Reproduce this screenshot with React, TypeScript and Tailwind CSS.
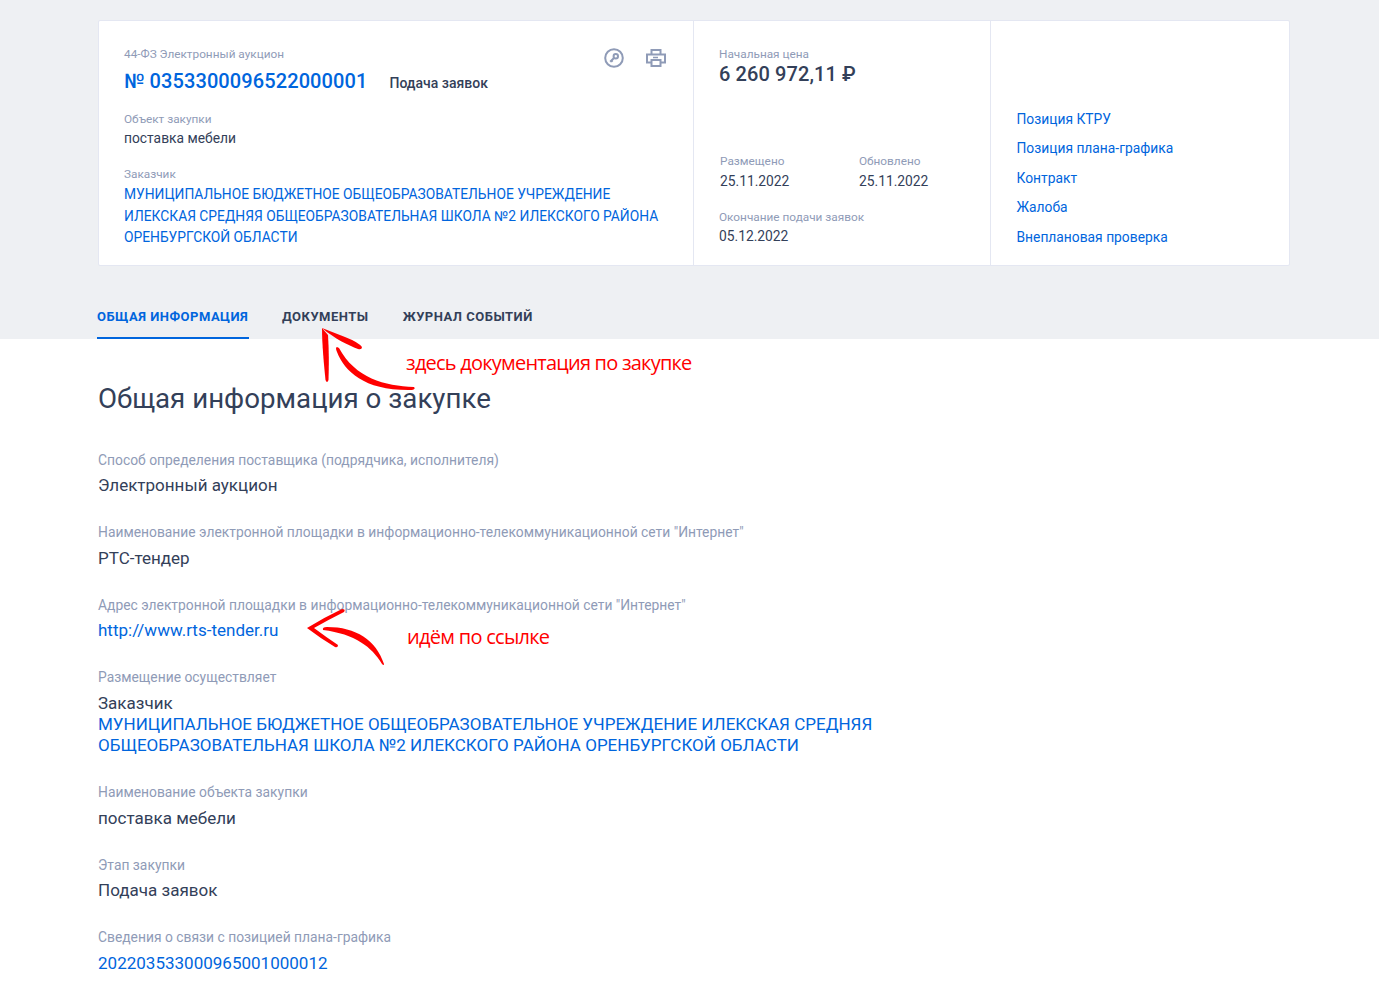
import React from "react";

type Field = {
  label: string;
  value?: string;
  link?: string;
};

const fields: Field[] = [
  { label: "Способ определения поставщика (подрядчика, исполнителя)", value: "Электронный аукцион" },
  { label: 'Наименование электронной площадки в информационно-телекоммуникационной сети "Интернет"', value: "РТС-тендер" },
  { label: 'Адрес электронной площадки в информационно-телекоммуникационной сети "Интернет"', link: "http://www.rts-tender.ru" },
];

const fieldsAfter: Field[] = [
  { label: "Наименование объекта закупки", value: "поставка мебели" },
  { label: "Этап закупки", value: "Подача заявок" },
  { label: "Сведения о связи с позицией плана-графика", link: "202203533000965001000012" },
];

const sideLinks = ["Позиция КТРУ", "Позиция плана-графика", "Контракт", "Жалоба", "Внеплановая проверка"];

function InfoField({ label, value, link }: Field) {
  return (
    <div className="h-[72.5px]">
      <div className="text-[13.85px] leading-[21px] text-[#8f9bb7]">{label}</div>
      <div className={"mt-[4.5px] text-[17.02px] leading-[21px] " + (link ? "text-[#0065dd]" : "text-[#334059]")}>
        {link || value}
      </div>
    </div>
  );
}

function SmallLabel({ children }: { children: React.ReactNode }) {
  return <div className="text-[11.8px] leading-[16px] text-[#8f9bb7]">{children}</div>;
}

export default function App() {
  return (
    <div className="relative min-h-[1000px] overflow-hidden bg-white font-['Roboto',sans-serif]">
      <div className="h-[339px] bg-[#eef0f3] pt-[20px]">
        <div className="mx-[98px] flex h-[246px] w-[1192px] rounded-[2px] border border-[#e4e7f2] bg-white">
          <div className="w-[595px] border-r border-[#e4e7f2] pl-[25px] pt-[25px]">
            <div className="flex h-[65px]">
              <div className="w-[480px]">
                <SmallLabel>44-ФЗ Электронный аукцион</SmallLabel>
                <div className="mt-[6px] flex items-baseline">
                  <span className="text-[20px] font-medium leading-[26px] tracking-[0.1px] text-[#0065dd]">№ 0353300096522000001</span>
                  <span className="ml-[22px] text-[14px] font-medium text-[#334059]">Подача заявок</span>
                </div>
              </div>
              <div className="flex items-start gap-[22px] pt-[2px]">
                <svg width="20" height="20" viewBox="0 0 20 20" fill="none" stroke="#8f9bb7" strokeWidth="2">
                  <circle cx="10" cy="10" r="8.8" />
                  <circle cx="11.8" cy="8.2" r="2.2" />
                  <path d="M10 10l-3.8 3.8M7.4 12.6l1.2 1.2" />
                </svg>
                <svg width="20" height="18" viewBox="0 0 20 18" fill="none" stroke="#8f9bb7" strokeWidth="2" className="mt-[1px]">
                  <path d="M5.5 5.5V1h9v4.5" />
                  <rect x="1" y="5.5" width="18" height="8" />
                  <rect x="5.5" y="11" width="9" height="6" fill="#ffffff" />
                  <path d="M7 8.5h5" strokeWidth="1.5" />
                </svg>
              </div>
            </div>
            <SmallLabel>Объект закупки</SmallLabel>
            <div className="mt-[1px] text-[13.82px] leading-[20px] text-[#334059]">поставка мебели</div>
            <div className="mt-[18px]">
              <SmallLabel>Заказчик</SmallLabel>
              <div className="mt-[2px] w-[550px] text-[13.82px] leading-[21.5px] text-[#0065dd]">
                МУНИЦИПАЛЬНОЕ БЮДЖЕТНОЕ ОБЩЕОБРАЗОВАТЕЛЬНОЕ УЧРЕЖДЕНИЕ ИЛЕКСКАЯ СРЕДНЯЯ ОБЩЕОБРАЗОВАТЕЛЬНАЯ ШКОЛА №2 ИЛЕКСКОГО РАЙОНА ОРЕНБУРГСКОЙ ОБЛАСТИ
              </div>
            </div>
          </div>
          <div className="w-[297px] border-r border-[#e4e7f2] pl-[25px] pt-[25px]">
            <SmallLabel>Начальная цена</SmallLabel>
            <div className="text-[20px] font-medium leading-[24px] tracking-[0.1px] text-[#334059]">6 260 972,11 ₽</div>
            <div className="mt-[67px] flex pl-[1px]">
              <div className="w-[139px]">
                <SmallLabel>Размещено</SmallLabel>
                <div className="mt-[2px] text-[13.82px] leading-[20px] text-[#334059]">25.11.2022</div>
              </div>
              <div>
                <SmallLabel>Обновлено</SmallLabel>
                <div className="mt-[2px] text-[13.82px] leading-[20px] text-[#334059]">25.11.2022</div>
              </div>
            </div>
            <div className="mt-[18px]">
              <SmallLabel>Окончание подачи заявок</SmallLabel>
              <div className="mt-[1px] text-[13.82px] leading-[20px] text-[#334059]">05.12.2022</div>
            </div>
          </div>
          <div className="flex-1 pl-[25.5px] pt-[88px]">
            <div className="flex flex-col gap-[9.4px]">
              {sideLinks.map((l) => (
                <div key={l} className="text-[13.82px] leading-[20px] text-[#0065dd]">{l}</div>
              ))}
            </div>
          </div>
        </div>
        <div className="mt-[31px] flex h-[42px] whitespace-nowrap pl-[97px] text-[13px] font-bold leading-[40px] tracking-[0.5px] text-[#334059]">
          <div className="h-[42px] w-[152px] border-b-2 border-[#0065dd] text-[#0065dd]">ОБЩАЯ ИНФОРМАЦИЯ</div>
          <div className="ml-[33px]">ДОКУМЕНТЫ</div>
          <div className="ml-[34px]">ЖУРНАЛ СОБЫТИЙ</div>
        </div>
      </div>

      <div className="px-[98px] pt-[43px]">
        <h1 className="text-[27.7px] leading-[34px] text-[#334059]">Общая информация о закупке</h1>
        <div className="mt-[33.5px]">
          {fields.map((f) => (
            <InfoField key={f.label} {...f} />
          ))}
          <div className="h-[115px]">
            <div className="text-[13.85px] leading-[21px] text-[#8f9bb7]">Размещение осуществляет</div>
            <div className="mt-[4.5px] w-[800px] text-[17.02px] leading-[21px] text-[#334059]">
              Заказчик
              <div className="text-[#0065dd]">
                МУНИЦИПАЛЬНОЕ БЮДЖЕТНОЕ ОБЩЕОБРАЗОВАТЕЛЬНОЕ УЧРЕЖДЕНИЕ ИЛЕКСКАЯ СРЕДНЯЯ ОБЩЕОБРАЗОВАТЕЛЬНАЯ ШКОЛА №2 ИЛЕКСКОГО РАЙОНА ОРЕНБУРГСКОЙ ОБЛАСТИ
              </div>
            </div>
          </div>
          {fieldsAfter.map((f) => (
            <InfoField key={f.label} {...f} />
          ))}
        </div>
      </div>

      {/* red annotations lie over the page */}
      <svg className="absolute left-0 top-0" width="1379" height="700" viewBox="0 0 1379 700" fill="#ff0000">
        <path d="M322 328 C322 345 324 365 325.5 380 Q327 384 328.5 380 C329 365 329 350 328 335 Z" />
        <path d="M322 328 L345 337 Q358 342 362 347 Q362 350 358 349 C348 345 335 339 322 328 Z" />
        <path d="M337 347 Q335 347.5 337 352 C345 372 365 391 412 390 Q416 389 414 387 C385 386 355 378 339 348 Z" />
        <path d="M307 628 Q325 617 342 609 Q346 609 344 612 Q328 620 314 628 Q326 637 338 645 Q338 648 335 647 Q320 638 307 628 Z" />
        <path d="M323 630 Q322 627 327 627 C356 627 376 640 384 664 Q384 666 382 664 C372 647 355 634 323 630 Z" />
      </svg>
      <div className="absolute left-[406px] top-[349px] font-['Open_Sans',sans-serif] text-[20px] leading-[28px] tracking-[-0.78px] text-[#ff0000]">
        здесь документация по закупке
      </div>
      <div className="absolute left-[407px] top-[623px] font-['Open_Sans',sans-serif] text-[20px] leading-[28px] tracking-[-0.72px] text-[#ff0000]">
        идём по ссылке
      </div>
    </div>
  );
}
